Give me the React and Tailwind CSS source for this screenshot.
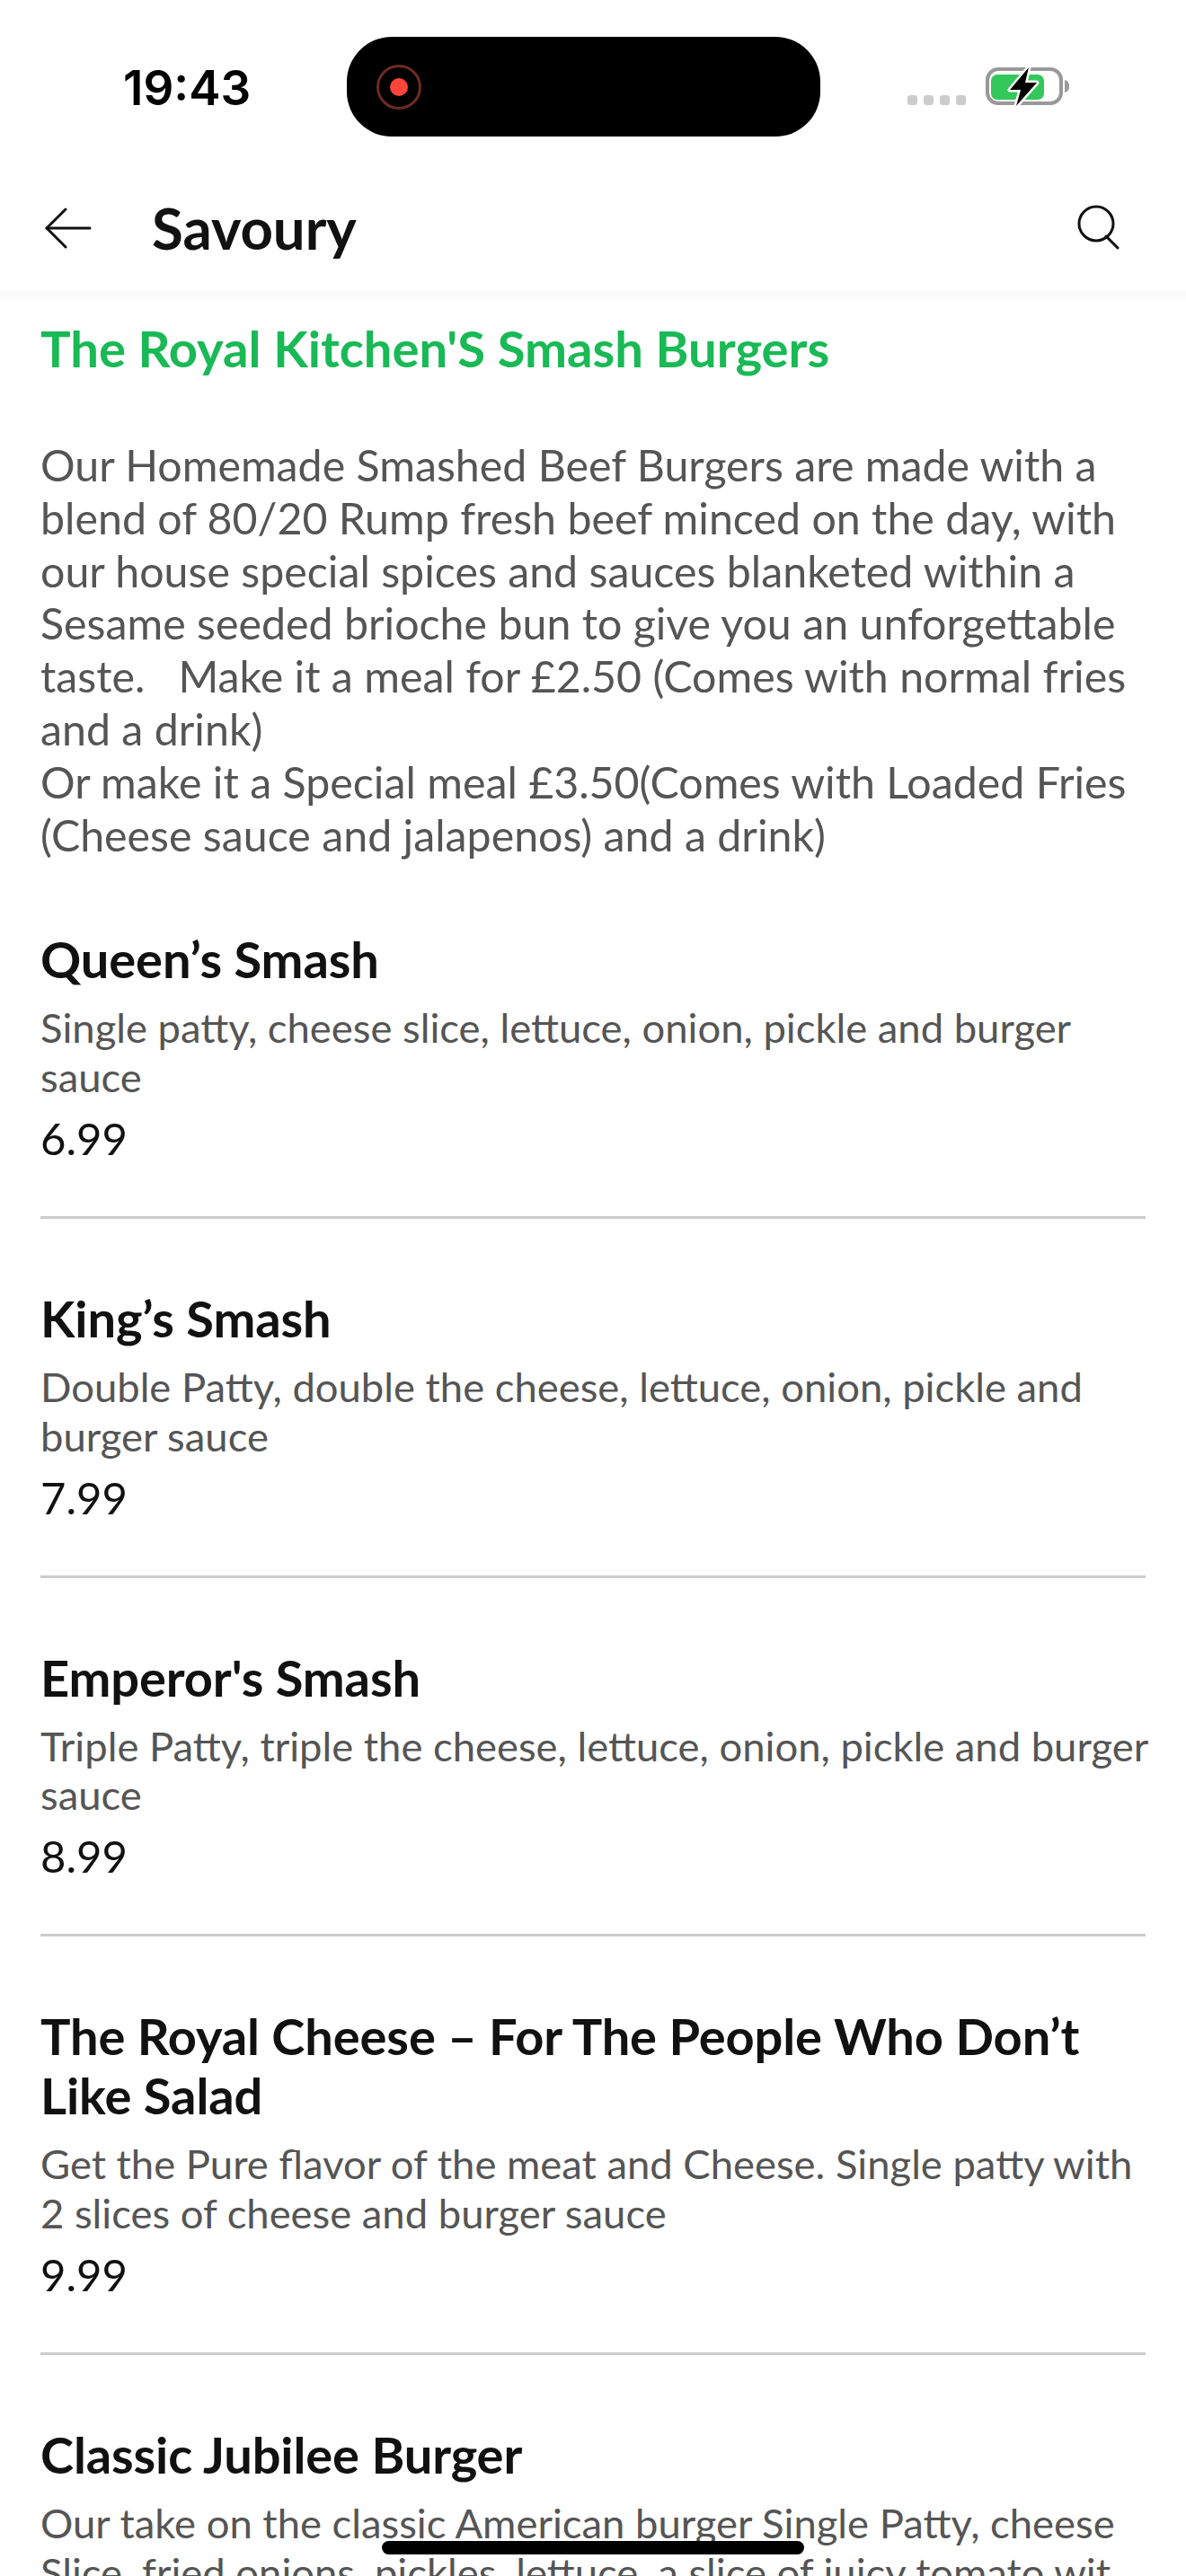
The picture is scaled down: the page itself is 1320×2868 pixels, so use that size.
const items = [
  { t: "Queen’s Smash", d: "Single patty, cheese slice, lettuce, onion, pickle and burger sauce", p: "6.99" },
  { t: "King’s Smash", d: "Double Patty, double the cheese, lettuce, onion, pickle and burger sauce", p: "7.99" },
  { t: "Emperor's Smash", d: "Triple Patty, triple the cheese, lettuce, onion, pickle and burger sauce", p: "8.99" },
  { t: "The Royal Cheese – For The People Who Don’t Like Salad", d: "Get the Pure flavor of the meat and Cheese. Single patty with 2 slices of cheese and burger sauce", p: "9.99" },
];

function Item({ t, d, p }) {
  return (
    <div className="border-b-[3px] border-[#cccccc] pt-[78px] pb-[58px]">
      <h3 className="text-[56px] leading-[66px] font-bold tracking-[-0.1px] text-[#111111]">{t}</h3>
      <p className="mt-[16px] text-[45.400px] leading-[54.8px] text-[#555555] w-[1240px]">{d}</p>
      <p className="mt-[11px] text-[49px] leading-[58px] text-[#111111]">{p}</p>
    </div>
  );
}

export default function App() {
  return (
    <div className="relative h-[2868px] w-[1320px] overflow-hidden bg-white font-['Lato',sans-serif]">
      <div className="flex h-[180px] items-start">
        <div className="w-[386px] pl-[137px] pt-[67px]">
          <span className="font-['Inter',sans-serif] text-[53px] leading-[62px] font-semibold text-black">19:43</span>
        </div>
        <div className="mt-[41px] flex h-[111px] w-[527px] items-center rounded-[50px] bg-black pl-[33px]">
          <div className="flex h-[50px] w-[50px] items-center justify-center rounded-full border-[3px] border-[#6e2a22]">
            <div className="h-[20px] w-[20px] rounded-full bg-[#ff453a]" />
          </div>
        </div>
        <div className="ml-[97px] mt-[106px] flex gap-[7px]">
          {[0, 1, 2, 3].map((i) => (
            <div key={i} className="h-[11px] w-[11px] rounded-[3px] bg-[#cccccc]" />
          ))}
        </div>
        <svg className="ml-[22px] mt-[72px]" width="96" height="48" viewBox="0 0 96 48">
          <rect x="2" y="5" width="82" height="38" rx="12" fill="none" stroke="#999999" strokeWidth="4" />
          <rect x="6" y="11" width="59" height="28" rx="7" fill="#34c759" />
          <path d="M88 17 C92 18 93 21 93 24 C93 27 92 30 88 31 Z" fill="#999999" />
          <path d="M48 3 L27 28 H39 L34 46 L57 20 H44 Z" fill="#000000" stroke="#ffffff" strokeWidth="5" strokeLinejoin="round" paintOrder="stroke" />
        </svg>
      </div>

      <header className="flex h-[144px] items-center pl-[50px] pr-[74px] pt-[4px]">
        <svg width="52" height="46" viewBox="0 0 52 46" fill="none" stroke="#111111" strokeWidth="3" strokeLinecap="round" strokeLinejoin="round">
          <path d="M2 23 H50" />
          <path d="M23 2 L2 23 L23 44" />
        </svg>
        <h1 className="ml-[67px] flex-1 text-[63.500px] leading-[72px] font-bold text-[#111111]">Savoury</h1>
        <svg className="-mt-[3px]" width="48" height="50" viewBox="0 0 48 50" fill="none" stroke="#111111" strokeWidth="3" strokeLinecap="round">
          <circle cx="22" cy="21" r="19" />
          <path d="M33 35 L46 48" />
        </svg>
      </header>
      <div className="h-[12px] bg-gradient-to-b from-[#f8f8f8] to-white" />

      <main className="px-[45px]">
        <h2 className="mt-[18px] text-[56.200px] leading-[68px] font-bold text-[#19b955]">The Royal Kitchen'S Smash Burgers</h2>
        <p className="mt-[66px] whitespace-pre-wrap text-[48.300px] leading-[58.8px] text-[#555555]">
          {"Our Homemade Smashed Beef Burgers are made with a blend of 80/20 Rump fresh beef minced on the day, with our house special spices and sauces blanketed within a Sesame seeded brioche bun to give you an unforgettable taste.   Make it a meal for £2.50 (Comes with normal fries and a drink)\nOr make it a Special meal £3.50(Comes with Loaded Fries (Cheese sauce and jalapenos) and a drink)"}
        </p>
        <div className="mt-[-1px]">
          {items.map((it) => (
            <Item key={it.t} {...it} />
          ))}
          <div className="pt-[78px]">
            <h3 className="text-[56px] leading-[66px] font-bold tracking-[-0.1px] text-[#111111]">Classic Jubilee Burger</h3>
            <p className="mt-[16px] w-[1240px] text-[45.400px] leading-[54.8px] text-[#555555]">Our take on the classic American burger Single Patty, cheese Slice, fried onions, pickles, lettuce, a slice of juicy tomato wit</p>
          </div>
        </div>
      </main>

      <div className="absolute left-[425px] top-[2829px] h-[15px] w-[470px] rounded-full bg-black" />
    </div>
  );
}
